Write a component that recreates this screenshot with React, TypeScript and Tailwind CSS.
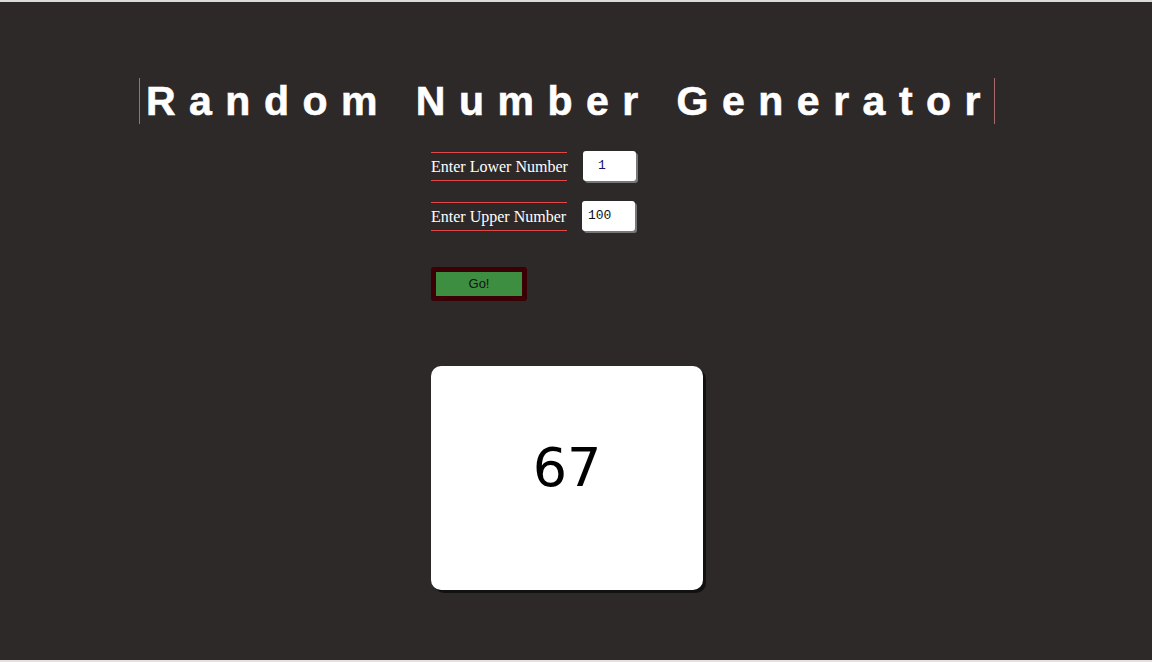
export default function App() {
  return (
    <div className="w-[1152px] h-[662px] bg-[#2e2929] flex flex-col overflow-hidden">
      <div className="h-[2px] bg-[#dcdcdc] shrink-0" />
      <div className="flex flex-col items-center pr-[18px] flex-1">
        <div className="mt-[76px] h-[46px] border-l border-r border-[#a86a6a] pl-[6px] flex items-center">
          <h1
            className="text-white font-bold text-[41px] leading-none tracking-[13.5px]"
            style={{ fontFamily: '"Liberation Sans", Arial, sans-serif', WebkitTextStroke: '0.6px white' }}
          >
            Random Number Generator
          </h1>
        </div>
        <div className="w-[272px] flex flex-col mt-[27px]">
          <div className="flex items-center gap-[16px]">
            <div
              className="w-[136px] h-[29px] border-t border-b border-[#e04848] text-white text-[16px] flex items-center whitespace-nowrap pt-[2px]"
              style={{ fontFamily: '"Liberation Serif", "Times New Roman", serif' }}
            >
              Enter Lower Number
            </div>
            <div
              className="w-[53px] h-[30px] bg-white rounded-[3px] shadow-[2px_2px_0_#777] text-[#14146a] text-[13px] flex items-center pl-[15px]"
              style={{ fontFamily: '"Liberation Mono", "Courier New", monospace' }}
            >
              1
            </div>
          </div>
          <div className="flex items-center gap-[16px] mt-[20px]">
            <div
              className="w-[136px] h-[29px] border-t border-b border-[#e04848] text-white text-[16px] flex items-center whitespace-nowrap pt-[2px]"
              style={{ fontFamily: '"Liberation Serif", "Times New Roman", serif' }}
            >
              Enter Upper Number
            </div>
            <div
              className="w-[53px] h-[30px] bg-white rounded-[3px] shadow-[2px_2px_0_#777] text-[#111] text-[13px] flex items-center pl-[6px] -ml-[1px]"
              style={{ fontFamily: '"Liberation Mono", "Courier New", monospace' }}
            >
              100
            </div>
          </div>
          <div className="mt-[36px] w-[96px] h-[34px] bg-[#3a0006] rounded-[3px] p-[5px]">
            <div
              className="w-full h-full bg-[#3e8e41] flex items-center justify-center text-[13px] text-[#111]"
              style={{ fontFamily: '"Liberation Sans", Arial, sans-serif' }}
            >
              Go!
            </div>
          </div>
          <div className="mt-[65px] w-[272px] h-[224px] bg-white rounded-[10px] shadow-[3px_3px_0_#111] flex items-center justify-center pb-[20px]">
            <span
              className="text-black text-[54px] leading-none"
              style={{ fontFamily: '"DejaVu Sans", Verdana, sans-serif' }}
            >
              67
            </span>
          </div>
        </div>
      </div>
      <div className="h-[2px] bg-[#e6e0e0] shrink-0" />
    </div>
  );
}
